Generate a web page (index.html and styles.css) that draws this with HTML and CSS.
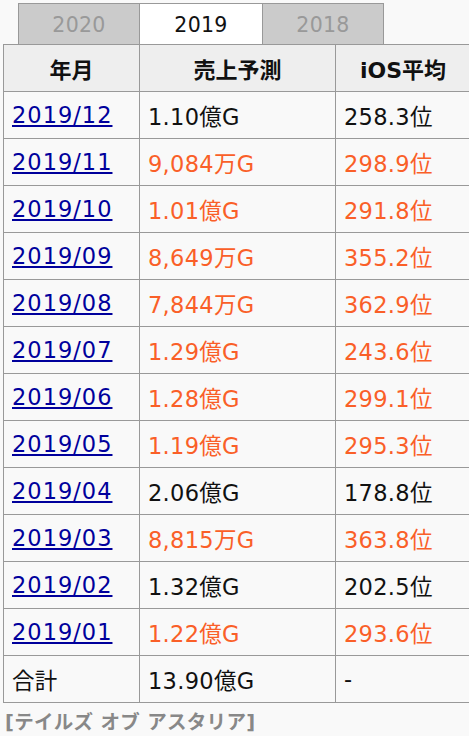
FILE: index.html
```html
<!DOCTYPE html>
<html lang="ja">
<head>
<meta charset="utf-8">
<link rel="stylesheet" href="styles.css">
</head>
<body>
<div class="wrap">
  <div class="tabs">
    <div class="tab">2020</div>
    <div class="tab active">2019</div>
    <div class="tab">2018</div>
  </div>
  <table class="sales">
    <colgroup><col class="c1"><col class="c2"><col class="c3"></colgroup>
    <thead>
      <tr><th>年月</th><th>売上予測</th><th>iOS平均</th></tr>
    </thead>
    <tbody>
      <tr><td><a href="#">2019/12</a></td><td>1.10億G</td><td>258.3位</td></tr>
      <tr class="hot"><td><a href="#">2019/11</a></td><td>9,084万G</td><td>298.9位</td></tr>
      <tr class="hot"><td><a href="#">2019/10</a></td><td>1.01億G</td><td>291.8位</td></tr>
      <tr class="hot"><td><a href="#">2019/09</a></td><td>8,649万G</td><td>355.2位</td></tr>
      <tr class="hot"><td><a href="#">2019/08</a></td><td>7,844万G</td><td>362.9位</td></tr>
      <tr class="hot"><td><a href="#">2019/07</a></td><td>1.29億G</td><td>243.6位</td></tr>
      <tr class="hot"><td><a href="#">2019/06</a></td><td>1.28億G</td><td>299.1位</td></tr>
      <tr class="hot"><td><a href="#">2019/05</a></td><td>1.19億G</td><td>295.3位</td></tr>
      <tr><td><a href="#">2019/04</a></td><td>2.06億G</td><td>178.8位</td></tr>
      <tr class="hot"><td><a href="#">2019/03</a></td><td>8,815万G</td><td>363.8位</td></tr>
      <tr><td><a href="#">2019/02</a></td><td>1.32億G</td><td>202.5位</td></tr>
      <tr class="hot"><td><a href="#">2019/01</a></td><td>1.22億G</td><td>293.6位</td></tr>
      <tr><td>合計</td><td>13.90億G</td><td>-</td></tr>
    </tbody>
  </table>
  <div class="footer">[テイルズ オブ アスタリア]</div>
</div>
</body>
</html>
```

FILE: styles.css
```css
html, body {
  margin: 0;
  padding: 0;
  background: #f9f9f9;
  overflow: hidden;
}
body {
  font-family: "DejaVu Sans", Verdana, "Noto Sans CJK JP", sans-serif;
  color: #111;
}
.wrap {
  padding: 3px 0 0 3px;
}
.tabs {
  display: flex;
  margin-left: 15px;
}
.tab {
  box-sizing: border-box;
  width: 122px;
  height: 41px;
  border: 1px solid #999;
  border-bottom: none;
  background: #cbcbcb;
  color: #999;
  font-size: 20.5px;
  letter-spacing: 0.3px;
  display: flex;
  align-items: center;
  justify-content: center;
  padding-top: 2px;
}
.tab.active {
  background: #fff;
  color: #111;
  border-left: none;
  border-right: none;
}
.sales {
  border-collapse: collapse;
  width: 467px;
  table-layout: fixed;
  font-size: 22.5px;
  letter-spacing: 0.3px;
}
.c1 { width: 136px; }
.c2 { width: 196px; }
.c3 { width: 135px; }
.sales th, .sales td {
  border: 1px solid #999;
  height: 46px;
  padding: 0 8px;
  vertical-align: middle;
  text-align: left;
  white-space: nowrap;
}
.sales th {
  background: #eee;
  text-align: center;
  font-weight: bold;
  font-size: 22px;
  letter-spacing: 0;
}
.sales td a {
  color: #00009c;
  letter-spacing: 1px;
}
.sales tr.hot td:nth-child(2),
.sales tr.hot td:nth-child(3) {
  color: #fa5f28;
}
.footer {
  margin-top: 8px;
  padding-left: 2px;
  color: #888;
  font-weight: bold;
  font-size: 19.5px;
  letter-spacing: 0.3px;
  line-height: 24px;
}
```
